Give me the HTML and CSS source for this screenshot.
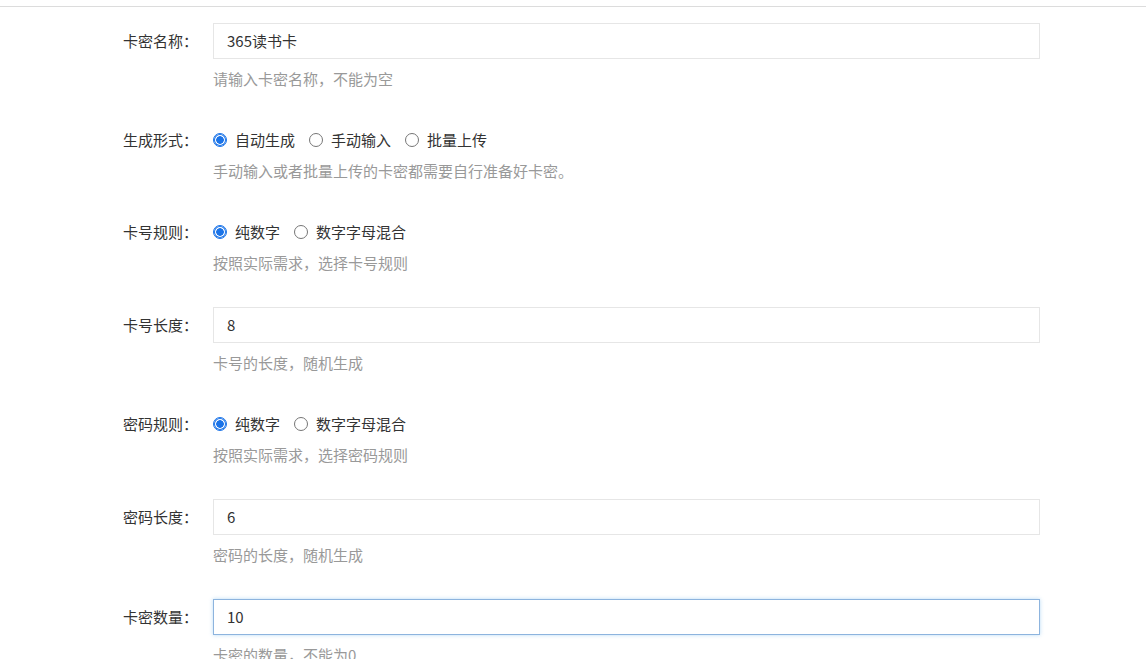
FILE: index.html
```html
<!DOCTYPE html>
<html lang="zh-CN">
<head>
<meta charset="utf-8">
<title>卡密</title>
<link rel="stylesheet" href="styles.css">
</head>
<body>
<div class="topbar"></div>
<form class="form">
  <div class="item">
    <label class="label">卡密名称：</label>
    <div class="field">
      <div class="input">365读书卡</div>
      <div class="help">请输入卡密名称，不能为空</div>
    </div>
  </div>
  <div class="item item-radio">
    <label class="label">生成形式：</label>
    <div class="field">
      <div class="radios">
        <span class="radio checked"><i class="dot"></i>自动生成</span>
        <span class="radio"><i class="dot"></i>手动输入</span>
        <span class="radio"><i class="dot"></i>批量上传</span>
      </div>
      <div class="help">手动输入或者批量上传的卡密都需要自行准备好卡密。</div>
    </div>
  </div>
  <div class="item item-radio">
    <label class="label">卡号规则：</label>
    <div class="field">
      <div class="radios">
        <span class="radio checked"><i class="dot"></i>纯数字</span>
        <span class="radio"><i class="dot"></i>数字字母混合</span>
      </div>
      <div class="help">按照实际需求，选择卡号规则</div>
    </div>
  </div>
  <div class="item">
    <label class="label">卡号长度：</label>
    <div class="field">
      <div class="input">8</div>
      <div class="help">卡号的长度，随机生成</div>
    </div>
  </div>
  <div class="item item-radio">
    <label class="label">密码规则：</label>
    <div class="field">
      <div class="radios">
        <span class="radio checked"><i class="dot"></i>纯数字</span>
        <span class="radio"><i class="dot"></i>数字字母混合</span>
      </div>
      <div class="help">按照实际需求，选择密码规则</div>
    </div>
  </div>
  <div class="item">
    <label class="label">密码长度：</label>
    <div class="field">
      <div class="input">6</div>
      <div class="help">密码的长度，随机生成</div>
    </div>
  </div>
  <div class="item">
    <label class="label">卡密数量：</label>
    <div class="field">
      <div class="input focus">10</div>
      <div class="help">卡密的数量，不能为0</div>
    </div>
  </div>
</form>
</body>
</html>
```

FILE: styles.css
```css
html, body {
  margin: 0;
  padding: 0;
  background: #fff;
  overflow: hidden;
}
body {
  font-family: "Noto Sans CJK SC", "Noto Sans", sans-serif;
  font-size: 15px;
  color: #333;
}
.topbar {
  height: 6px;
  border-bottom: 1px solid #dcdcdc;
}
.form {
  padding-top: 16px;
}
.item {
  display: flex;
  margin-bottom: 33px;
}
.label {
  width: 213px;
  padding-right: 15px;
  box-sizing: border-box;
  text-align: right;
  line-height: 36px;
  color: #333;
  flex: none;
}
.item-radio .label {
  line-height: 34px;
}
.field {
  width: 827px;
}
.input {
  height: 36px;
  box-sizing: border-box;
  border: 1px solid #e6e6e6;
  padding: 0 13px;
  line-height: 34px;
  color: #333;
  background: #fff;
}
.input.focus {
  border-color: #8db4de;
  box-shadow: 0 0 4px rgba(102, 175, 233, 0.45);
}
.help {
  margin-top: 9px;
  line-height: 22px;
  color: #999;
}
.item-radio .help {
  margin-top: 3px;
}
.radios {
  display: flex;
  height: 34px;
  align-items: center;
}
.radio {
  display: inline-flex;
  align-items: center;
  margin-right: 14px;
  color: #333;
  line-height: 34px;
}
.dot {
  width: 14px;
  height: 14px;
  box-sizing: border-box;
  border: 1px solid #767676;
  border-radius: 50%;
  margin-right: 8px;
  background: #fff;
}
.radio.checked .dot {
  border: 1px solid #1a73e8;
  background: radial-gradient(circle, #1a73e8 0, #1a73e8 3.5px, #fff 4.1px, #fff 100%);
  box-shadow: inset 0 0 0 1px #1a73e8;
}
```
